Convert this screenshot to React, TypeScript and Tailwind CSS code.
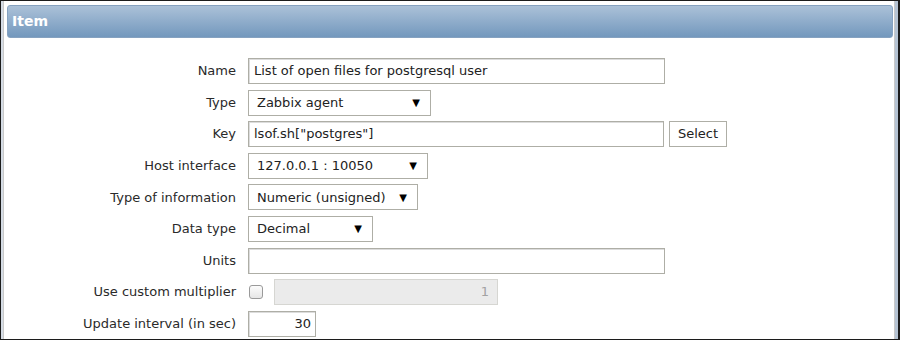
import React from "react";

const font = { fontFamily: '"DejaVu Sans", Verdana, sans-serif' };

const Label = ({ text }: { text: string }) => (
  <div className="flex h-[26px] items-center justify-end text-[13px] text-[#2a2a2a]">{text}</div>
);

const TextBox = ({ value, width, align = "left" }: { value: string; width: string; align?: "left" | "right" }) => (
  <div
    className={`flex h-[26px] items-center border border-[#aeaea6] bg-white shadow-[inset_1px_1px_0_#dcdcdc] text-[13px] text-[#222] ${width} ${
      align === "right" ? "justify-end pr-[4px]" : "pl-[5px]"
    }`}
  >
    {value}
  </div>
);

const SelectBox = ({ value, width }: { value: string; width: string }) => (
  <div
    className={`flex h-[26px] items-center justify-between border border-[#aeaea6] bg-white pl-[8px] pr-[10px] text-[13px] text-[#222] ${width}`}
  >
    <span>{value}</span>
    <span className="text-[10px] text-black">▼</span>
  </div>
);

export default function App() {
  return (
    <div className="flex h-[340px] w-[900px] border border-r-2 border-[#1c1c1c] bg-white" style={font}>
      <div className="w-[2px] bg-[#d5dce5]" />
      <div className="flex flex-1 flex-col border-l border-r border-[#c9c9c9]">
        <div className="ml-[3px] mr-[1px] mt-[4px] flex h-[33px] items-center rounded-[3px] border border-[#86a2c0] bg-gradient-to-b from-[#abc1d8] to-[#7398bd] pl-[4px] text-[14px] font-bold text-white">
          Item
        </div>
        <div className="mt-[20px] grid grid-cols-[232px_1fr] gap-x-[12px] gap-y-[5.6px]">
          <Label text="Name" />
          <TextBox value="List of open files for postgresql user" width="w-[417px]" />

          <Label text="Type" />
          <SelectBox value="Zabbix agent" width="w-[183px]" />

          <Label text="Key" />
          <div className="flex gap-[5px]">
            <TextBox value='lsof.sh["postgres"]' width="w-[416px]" />
            <div className="flex h-[26px] w-[58px] items-center justify-center border border-[#aeaea6] bg-white text-[13px] text-[#222]">
              Select
            </div>
          </div>

          <Label text="Host interface" />
          <SelectBox value="127.0.0.1 : 10050" width="w-[180px]" />

          <Label text="Type of information" />
          <SelectBox value="Numeric (unsigned)" width="w-[170px]" />

          <Label text="Data type" />
          <SelectBox value="Decimal" width="w-[125px]" />

          <Label text="Units" />
          <TextBox value="" width="w-[417px]" />

          <Label text="Use custom multiplier" />
          <div className="flex h-[26px] items-center">
            <div className="ml-[1px] h-[14px] w-[14px] rounded-[3px] border border-[#9a9a9a] bg-gradient-to-b from-[#fcfcfc] to-[#e6e6e6]" />
            <div className="ml-[11px] flex h-[26px] w-[224px] items-center justify-end border border-[#d6d6d2] bg-[#ebebeb] pr-[8px] text-[13px] text-[#a2a2a2]">
              1
            </div>
          </div>

          <Label text="Update interval (in sec)" />
          <TextBox value="30" width="w-[68px]" align="right" />
        </div>
      </div>
      <div className="w-[3px] bg-[#b5c3d3]" />
    </div>
  );
}
